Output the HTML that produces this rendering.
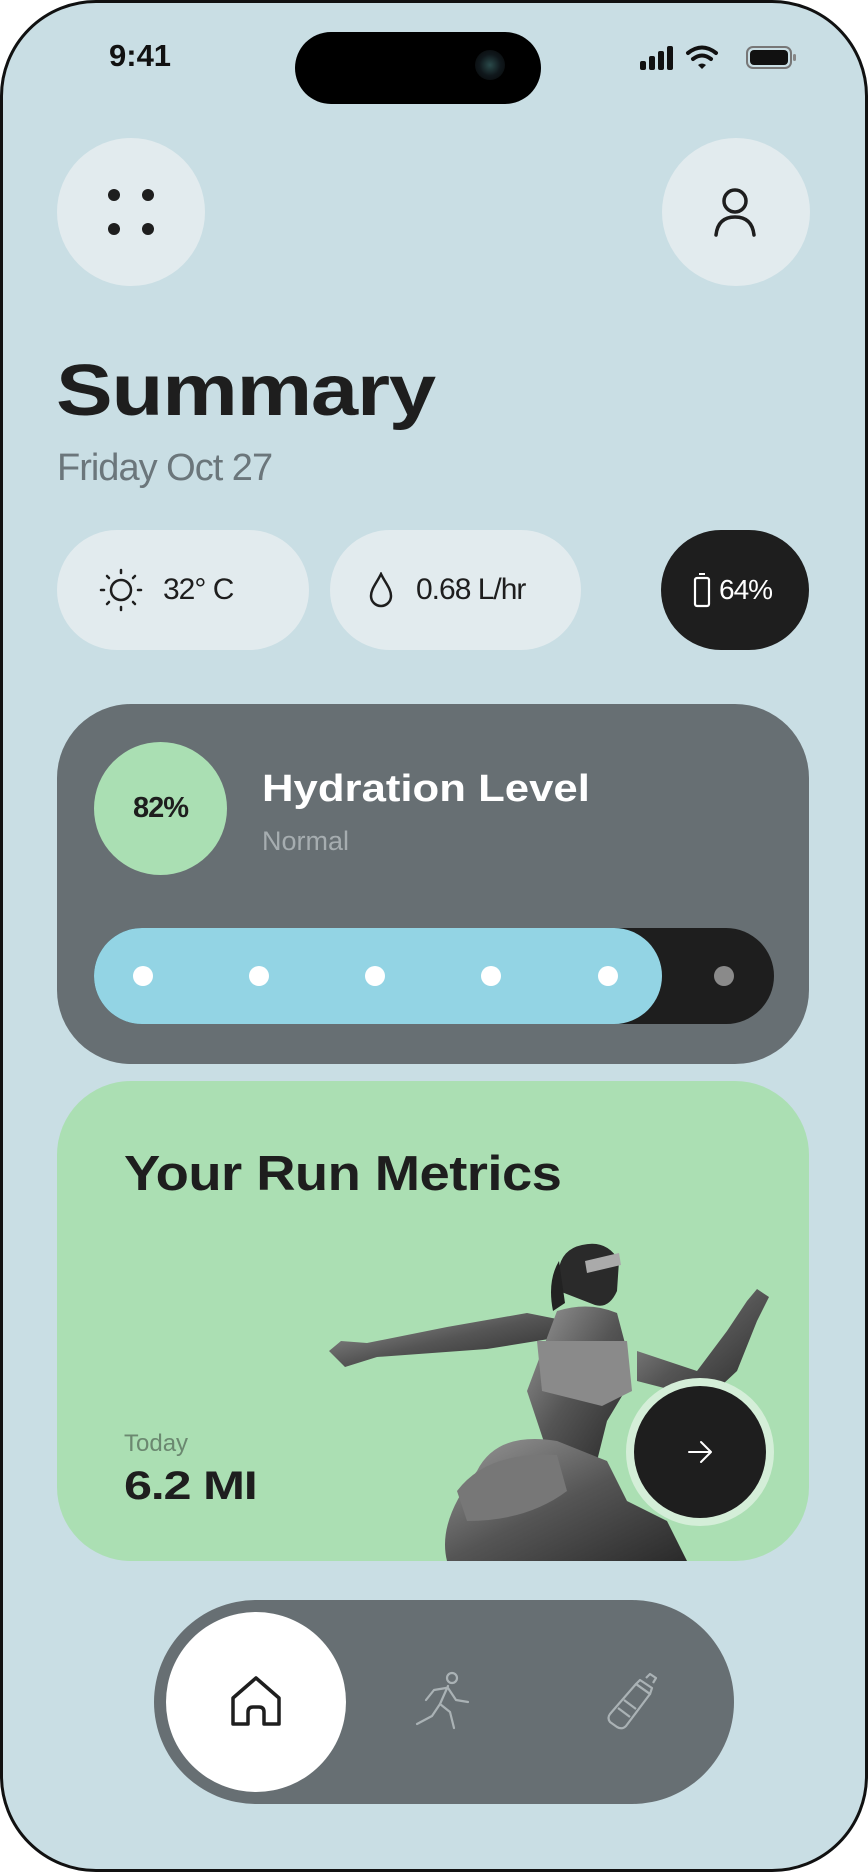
<!DOCTYPE html>
<html><head><meta charset="utf-8">
<style>
*{margin:0;padding:0;box-sizing:border-box}
html,body{width:868px;height:1872px;background:#fff;overflow:hidden;font-family:"Liberation Sans",sans-serif}
.frame{position:absolute;left:0;top:0;width:868px;height:1872px;background:#c9dee4;border-radius:96px;overflow:hidden}
.bord{position:absolute;left:0;top:0;width:868px;height:1872px;border:3px solid #111;border-radius:96px;z-index:10}
.abs{position:absolute}
.wide{transform-origin:left center;white-space:nowrap}
.circle{border-radius:50%}
.pill{background:#e2ebee;border-radius:60px;display:flex;align-items:center}
</style></head><body>
<div class="frame">
  <div class="abs" style="left:109px;top:38px;font-size:31px;font-weight:700;color:#111">9:41</div>
  <div class="abs" style="left:295px;top:32px;width:246px;height:72px;background:#000;border-radius:36px"></div>
  <div class="abs circle" style="left:475px;top:50px;width:30px;height:30px;background:radial-gradient(circle at 50% 50%,#2a4a4a 0,#10181c 50%,#050505 100%)"></div>
  <svg class="abs" style="left:638px;top:44px" width="165" height="28" viewBox="0 0 165 28">
    <rect x="2" y="17" width="6" height="9" rx="2" fill="#111"/>
    <rect x="11" y="12" width="6" height="14" rx="2" fill="#111"/>
    <rect x="20" y="7" width="6" height="19" rx="2" fill="#111"/>
    <rect x="29" y="2" width="6" height="24" rx="2" fill="#111"/>
    <path d="M50 9 Q64 -2 78 9" stroke="#111" stroke-width="4" fill="none" stroke-linecap="round"/>
    <path d="M55 15 Q64 8 73 15" stroke="#111" stroke-width="4" fill="none" stroke-linecap="round"/>
    <path d="M60 21 L64 25 L68 21 Q64 18 60 21Z" fill="#111"/>
    <rect x="109" y="3" width="44" height="21" rx="6" fill="none" stroke="#777" stroke-width="2"/>
    <rect x="112" y="6" width="38" height="15" rx="4" fill="#111"/>
    <rect x="155" y="10" width="3" height="7" rx="1.5" fill="#888"/>
  </svg>

  <div class="abs circle" style="left:57px;top:138px;width:148px;height:148px;background:#e2ebee"></div>
  <svg class="abs" style="left:106px;top:187px" width="50" height="50"><circle cx="8" cy="8" r="6" fill="#1e1e1e"/><circle cx="42" cy="8" r="6" fill="#1e1e1e"/><circle cx="8" cy="42" r="6" fill="#1e1e1e"/><circle cx="42" cy="42" r="6" fill="#1e1e1e"/></svg>
  <div class="abs circle" style="left:662px;top:138px;width:148px;height:148px;background:#e2ebee"></div>
  <svg class="abs" style="left:712px;top:187px" width="46" height="50" viewBox="0 0 46 50"><circle cx="23" cy="14" r="11" fill="none" stroke="#1e1e1e" stroke-width="3.5"/><path d="M4 48 Q6 30 23 30 Q40 30 42 48" fill="none" stroke="#1e1e1e" stroke-width="3.5" stroke-linecap="round"/></svg>

  <div class="abs wide" style="left:56px;top:350px;font-size:72px;font-weight:700;color:#1e1e1e;letter-spacing:-1px;transform:scaleX(1.18)">Summary</div>
  <div class="abs" style="left:57px;top:447px;font-size:38px;color:#6b767b;letter-spacing:-1px">Friday Oct 27</div>

  <div class="abs pill" style="left:57px;top:530px;width:252px;height:120px">
    <svg style="margin-left:42px" width="44" height="44" viewBox="0 0 44 44"><circle cx="22" cy="22" r="10" fill="none" stroke="#1e1e1e" stroke-width="2.5"/><g stroke="#1e1e1e" stroke-width="2.5" stroke-linecap="round"><line x1="22" y1="2" x2="22" y2="5"/><line x1="22" y1="39" x2="22" y2="42"/><line x1="2" y1="22" x2="5" y2="22"/><line x1="39" y1="22" x2="42" y2="22"/><line x1="8" y1="8" x2="10" y2="10"/><line x1="34" y1="34" x2="36" y2="36"/><line x1="36" y1="8" x2="34" y2="10"/><line x1="8" y1="36" x2="10" y2="34"/></g></svg>
    <span style="margin-left:20px;font-size:30px;color:#1e1e1e;letter-spacing:-1px">32° C</span>
  </div>
  <div class="abs pill" style="left:330px;top:530px;width:251px;height:120px">
    <svg style="margin-left:38px" width="26" height="36" viewBox="0 0 26 36"><path d="M13 2 C8 12 3 17 3 24 a10 10 0 0 0 20 0 C23 17 18 12 13 2Z" fill="none" stroke="#1e1e1e" stroke-width="2.5"/></svg>
    <span style="margin-left:22px;font-size:30px;color:#1e1e1e;letter-spacing:-1px">0.68 L/hr</span>
  </div>
  <div class="abs" style="left:661px;top:530px;width:148px;height:120px;border-radius:60px;background:#1e1e1e;display:flex;align-items:center">
    <svg style="margin-left:32px" width="18" height="36" viewBox="0 0 18 36"><rect x="6" y="1" width="6" height="2" fill="#fff"/><rect x="2" y="6" width="14" height="28" rx="2" fill="none" stroke="#fff" stroke-width="2.2"/></svg>
    <span style="margin-left:8px;font-size:28px;color:#fff;letter-spacing:-1px">64%</span>
  </div>

  <div class="abs" style="left:57px;top:704px;width:752px;height:360px;border-radius:74px;background:#676f73"></div>
  <div class="abs circle" style="left:94px;top:742px;width:133px;height:133px;background:#aadfb3;display:flex;align-items:center;justify-content:center;font-size:29px;color:#1e1e1e;font-weight:700;letter-spacing:-1px">82%</div>
  <div class="abs wide" style="left:262px;top:768px;font-size:38px;color:#fff;font-weight:700;transform:scaleX(1.15)">Hydration Level</div>
  <div class="abs" style="left:262px;top:826px;font-size:27px;color:#a6adb0">Normal</div>
  <div class="abs" style="left:94px;top:928px;width:680px;height:96px;border-radius:48px;background:#1e1e1e"></div>
  <div class="abs" style="left:94px;top:928px;width:568px;height:96px;border-radius:48px;background:#93d4e4"></div>
  <div class="abs circle" style="left:133px;top:966px;width:20px;height:20px;background:#fff"></div>
  <div class="abs circle" style="left:249px;top:966px;width:20px;height:20px;background:#fff"></div>
  <div class="abs circle" style="left:365px;top:966px;width:20px;height:20px;background:#fff"></div>
  <div class="abs circle" style="left:481px;top:966px;width:20px;height:20px;background:#fff"></div>
  <div class="abs circle" style="left:598px;top:966px;width:20px;height:20px;background:#fff"></div>
  <div class="abs circle" style="left:714px;top:966px;width:20px;height:20px;background:#8a8a8a"></div>

  <div class="abs" style="left:57px;top:1081px;width:752px;height:480px;border-radius:74px;background:#abdfb3;overflow:hidden">
    <svg class="abs" style="left:270px;top:150px" width="480" height="330" viewBox="0 0 480 330">
      <defs><linearGradient id="g" x1="0" y1="0" x2="1" y2="1"><stop offset="0" stop-color="#9a9a9a"/><stop offset="0.5" stop-color="#555"/><stop offset="1" stop-color="#2a2a2a"/></linearGradient></defs>
      <path d="M232 60 Q226 20 255 14 Q280 8 292 30 L290 60 Q282 78 268 74 Z" fill="#2a2a2a"/>
      <path d="M232 30 Q220 50 226 80 L238 72 Z" fill="#222"/>
      <path d="M258 30 L292 22 L294 34 L260 42Z" fill="#aaa"/>
      <path d="M2 120 L14 110 L40 112 L120 96 L200 82 L230 88 L222 108 L160 118 L50 126 L18 136Z" fill="url(#g)"/>
      <path d="M310 120 L370 140 L400 100 L420 70 L430 58 L442 66 L430 90 L410 140 L380 168 L310 150Z" fill="url(#g)"/>
      <path d="M230 80 Q262 70 290 82 L300 120 L298 160 L280 190 L270 230 L220 220 L200 160 Z" fill="url(#g)"/>
      <path d="M210 110 L300 110 L305 160 L275 175 L215 160Z" fill="#8a8a8a"/>
      <path d="M150 240 Q170 200 230 210 L280 230 L300 270 L340 290 L360 330 L120 330 Q110 290 150 240Z" fill="url(#g)"/>
      <path d="M130 260 Q160 220 230 224 L240 260 Q200 290 140 290Z" fill="#777"/>
    </svg>
  </div>
  <div class="abs wide" style="left:124px;top:1146px;font-size:49px;color:#1e1e1e;font-weight:700;letter-spacing:-0.5px;transform:scaleX(1.11)">Your Run Metrics</div>
  <div class="abs" style="left:124px;top:1430px;font-size:24px;color:#6b8870">Today</div>
  <div class="abs wide" style="left:124px;top:1464px;font-size:40px;color:#1e1e1e;font-weight:700;letter-spacing:-1px;transform:scaleX(1.26)">6.2 MI</div>
  <div class="abs circle" style="left:626px;top:1378px;width:148px;height:148px;background:#d4eed8"></div>
  <div class="abs circle" style="left:634px;top:1386px;width:132px;height:132px;background:#1e1e1e"></div>
  <svg class="abs" style="left:686px;top:1438px" width="28" height="28" viewBox="0 0 28 28"><path d="M3 14 H25 M15 4 L25 14 L15 24" fill="none" stroke="#fff" stroke-width="2" stroke-linecap="round" stroke-linejoin="round"/></svg>

  <div class="abs" style="left:154px;top:1600px;width:580px;height:204px;border-radius:102px;background:#676f73"></div>
  <div class="abs circle" style="left:166px;top:1612px;width:180px;height:180px;background:#fff"></div>
  <svg class="abs" style="left:228px;top:1674px" width="56" height="56" viewBox="0 0 56 56"><path d="M5 24 L28 4 L51 24 V50 H36 V38 Q36 33 31 33 H25 Q20 33 20 38 V50 H5Z" fill="none" stroke="#1e1e1e" stroke-width="3.5" stroke-linejoin="round"/></svg>
  <svg class="abs" style="left:414px;top:1670px" width="60" height="62" viewBox="0 0 60 62" fill="none" stroke="#aab2b5" stroke-width="2.2" stroke-linecap="round" stroke-linejoin="round"><circle cx="38" cy="8" r="5"/><path d="M34 16 L26 34 L36 42 L40 58"/><path d="M26 34 L18 46 L3 54"/><path d="M32 18 L20 20 L12 30"/><path d="M34 18 L42 30 L54 32"/></svg>
  <svg class="abs" style="left:606px;top:1672px" width="56" height="58" viewBox="0 0 56 58" fill="none" stroke="#aab2b5" stroke-width="2.2" stroke-linejoin="round"><path d="M30 12 L44 22 L20 54 Q16 58 11 55 L4 50 Q1 46 4 42 Z"/><path d="M34 8 L46 16 L44 22 L30 12Z"/><path d="M40 6 L44 2 L50 6 L47 11"/><path d="M12 36 L24 45 M18 28 L30 37"/></svg>
</div>
<div class="bord"></div>
</body></html>
